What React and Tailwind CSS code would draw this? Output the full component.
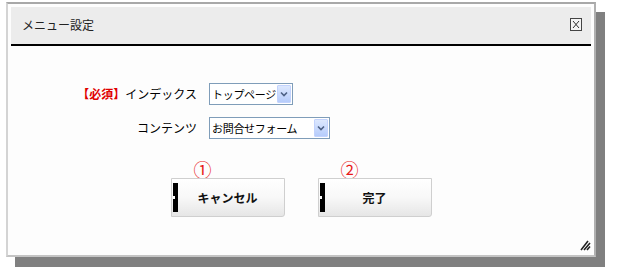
import React from "react";

const font = { fontFamily: '"Noto Sans CJK JP", "Noto Sans", sans-serif' };

const FakeSelect = ({ value, width }) => (
  <div
    className={`flex items-center justify-between h-[22px] border border-[#7f9db9] bg-white pl-[2px] pr-[1px] ${width}`}
  >
    <span className="text-[11px] leading-none text-black tracking-[-0.3px] whitespace-nowrap">{value}</span>
    <span className="flex items-center justify-center w-[14px] h-[18px] rounded-[1px] border border-[#c3d3fd] bg-gradient-to-b from-[#dde8fe] to-[#b6ccfb]">
      <svg width="8" height="6" viewBox="0 0 8 6">
        <path d="M1 1.5 L4 4.5 L7 1.5" fill="none" stroke="#4d6185" strokeWidth="1.6" />
      </svg>
    </span>
  </div>
);

const Button = ({ label, mark }) => (
  <div className="relative">
    <span className="absolute left-[23px] -top-[18px] text-[18px] leading-none text-[#e81818]">{mark}</span>
    <button className="relative flex items-center justify-center w-[114px] h-[39px] border border-[#cfcfcf] bg-gradient-to-b from-white via-[#f8f8f8] to-[#e6e6e6] rounded-br-[3px]">
      <span className="absolute left-[1px] top-[4px] w-[5px] h-[29px] bg-black" />
      <span className="absolute left-[1px] top-[17px] w-[2px] h-[3px] bg-white" />
      <span className="text-[12px] font-bold text-[#111]">{label}</span>
    </button>
  </div>
);

export default function App() {
  return (
    <div className="relative w-[628px] h-[275px] bg-white" style={font}>
      <div className="absolute left-[6px] top-[31px] w-[1px] h-[6px] bg-[#555]" />
      <div className="pt-[2px] pl-[6px]">
        <div className="relative w-[590px] h-[255px] border-2 border-[#c4c4c4] border-t-[#a8a8a8] border-r-[#b0b0b0] border-l-[#d4d4d4] bg-[#fdfdfd] p-[3px] shadow-[9px_10px_0_#808080]">
          {/* Header */}
          <div className="flex items-center justify-between h-[39px] bg-[#ececec] border-b-2 border-black pl-[11px] pr-[9px] pb-[2px]">
            <span className="text-[12px] text-[#222]">メニュー設定</span>
            <span className="flex items-center justify-center w-[12px] h-[13px] border border-[#444] bg-[#f4f4f4]">
              <svg width="8" height="9" viewBox="0 0 8 9">
                <path d="M1 1 L7 8 M7 1 L1 8" stroke="#333" strokeWidth="1" fill="none" />
              </svg>
            </span>
          </div>

          {/* Form */}
          <div className="flex flex-col gap-[12px] pl-[65px] pt-[37px]">
            <div className="flex items-center">
              <div className="w-[121px] text-right text-[12px] text-black whitespace-nowrap">
                <span className="font-bold text-[#e00000]">【必須】</span>インデックス
              </div>
              <div className="ml-[12px]">
                <FakeSelect value="トップページ" width="w-[84px]" />
              </div>
            </div>
            <div className="flex items-center">
              <div className="w-[121px] text-right text-[12px] text-black">コンテンツ</div>
              <div className="ml-[12px]">
                <FakeSelect value="お問合せフォーム" width="w-[121px]" />
              </div>
            </div>
          </div>

          {/* Buttons */}
          <div className="flex justify-center gap-[33px] pt-[39px]">
            <Button label="キャンセル" mark="①" />
            <Button label="完了" mark="②" />
          </div>

          {/* Resize grip */}
          <svg className="absolute right-[3px] bottom-[4px]" width="11" height="12" viewBox="0 0 11 12">
            <path d="M1 11 L8 2 M4 11 L10 4 M7 11 L10 7.5" stroke="#222" strokeWidth="1.6" fill="none" />
          </svg>
        </div>
      </div>
    </div>
  );
}
